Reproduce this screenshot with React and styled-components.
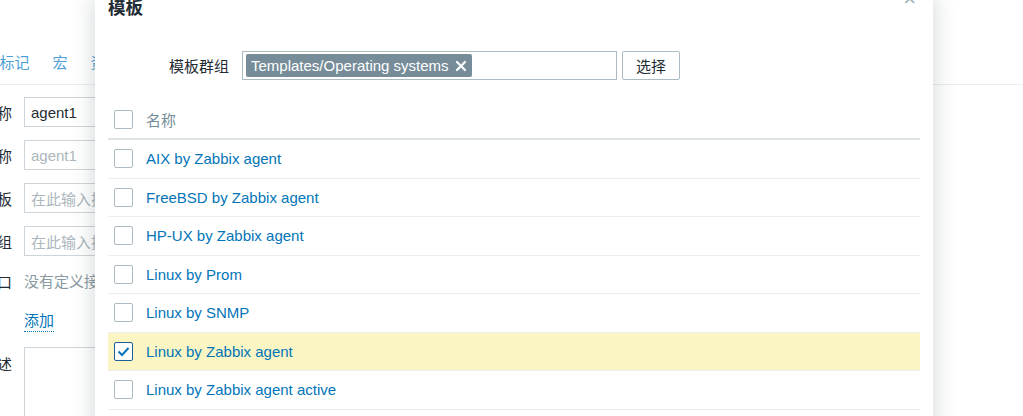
import styled, { createGlobalStyle } from "styled-components";

const GlobalStyle = createGlobalStyle`
  html, body {
    margin: 0;
    padding: 0;
    background: #ffffff;
    overflow: hidden;
  }
  body {
    font-family: "Liberation Sans", "Noto Sans CJK SC", sans-serif;
    font-size: 15px;
    color: #1f2c33;
  }
`;

// Background page
const Page = styled.div`
  position: relative;
  width: 1023px;
  height: 416px;
  overflow: hidden;
`;

const TabBar = styled.div`
  display: flex;
  height: 84px;
  align-items: flex-end;
  border-bottom: 1px solid #ebeef0;
  margin-left: -12px;
`;

const Tab = styled.span`
  padding: 0 11.5px 10px;
  line-height: 22px;
  color: #4f9fd4;
`;

const Form = styled.div`
  display: grid;
  grid-template-columns: 200px 300px;
  column-gap: 12px;
  row-gap: 13px;
  align-items: center;
  margin-left: -188px;
  padding-top: 12px;
`;

const Label = styled.div`
  text-align: right;
  white-space: nowrap;
  align-self: ${(p) => (p.$top ? "start" : "center")};
  padding-top: ${(p) => (p.$top ? "8px" : "0")};
`;

const Input = styled.div`
  height: 30px;
  box-sizing: border-box;
  border: 1px solid #cdd5da;
  padding: 0 6px;
  display: flex;
  align-items: center;
  color: ${(p) => (p.$muted ? "#acb6bc" : "#1f2c33")};
`;

const Note = styled.div`
  color: #8b9aa2;
  line-height: 25px;
`;

const DottedLink = styled.span`
  justify-self: start;
  color: #0275b8;
  border-bottom: 1px dotted #0275b8;
  line-height: 20px;
  margin-top: 4px;
`;

const TextArea = styled.div`
  height: 120px;
  border: 1px solid #cdd5da;
  margin-top: 2px;
`;

// Modal
const Modal = styled.div`
  position: absolute;
  left: 95px;
  top: -4px;
  width: 838px;
  height: 440px;
  background: #ffffff;
  box-shadow: 0 0 22px rgba(40, 60, 70, 0.22);
  box-sizing: border-box;
  padding: 0 13px;
`;

const Header = styled.div`
  display: flex;
  justify-content: space-between;
  align-items: flex-start;
  height: 24px;
`;

const Title = styled.h4`
  margin: 0;
  font-size: 17.5px;
  font-weight: bold;
  line-height: 24px;
  color: #1f2c33;
`;

const Close = styled.span`
  margin-top: -8px;
  margin-right: 4px;
  color: #9fb0b8;
  font-size: 22px;
  line-height: 22px;
`;

const FilterRow = styled.div`
  display: flex;
  align-items: center;
  margin-top: 31px;
`;

const FilterLabel = styled.div`
  width: 121px;
  text-align: right;
  margin-right: 13px;
`;

const MultiSelect = styled.div`
  width: 375px;
  height: 29px;
  box-sizing: border-box;
  border: 1px solid #acbbc2;
  padding: 2px 3px;
  display: flex;
  align-items: center;
`;

const Chip = styled.span`
  display: inline-flex;
  align-items: center;
  gap: 6px;
  height: 23px;
  padding: 0 5px;
  border-radius: 2px;
  background: #768d99;
  color: #ffffff;
  white-space: nowrap;
`;

const Button = styled.button`
  margin-left: 5px;
  width: 58px;
  height: 29px;
  border: 1px solid #acbbc2;
  border-radius: 2px;
  background: #ffffff;
  font-family: inherit;
  font-size: 15px;
  color: #1f2c33;
  padding: 0;
`;

const Table = styled.div`
  margin-top: 20px;
`;

const Row = styled.div`
  display: flex;
  align-items: center;
  gap: 13px;
  height: ${(p) => (p.$head ? "38px" : "37.5px")};
  padding-left: 6px;
  box-sizing: content-box;
  border-bottom: ${(p) => (p.$head ? "2px solid #dfe4e7" : "1px solid #ebeef0")};
  background: ${(p) => (p.$selected ? "#fbf5c4" : "transparent")};
  color: ${(p) => (p.$head ? "#768d99" : "#0275b8")};
`;

const Check = styled.span`
  width: 19px;
  height: 19px;
  box-sizing: border-box;
  border: 1px solid ${(p) => (p.$on ? "#1c5f94" : "#acbbc2")};
  border-radius: 2px;
  background: #ffffff;
  display: flex;
  align-items: center;
  justify-content: center;
  flex: none;
`;

const templates = [
  "AIX by Zabbix agent",
  "FreeBSD by Zabbix agent",
  "HP-UX by Zabbix agent",
  "Linux by Prom",
  "Linux by SNMP",
  "Linux by Zabbix agent",
  "Linux by Zabbix agent active",
];

const App = () => {
  return (
    <Page>
      <GlobalStyle />
      <TabBar>
        <Tab>标记</Tab>
        <Tab>宏</Tab>
        <Tab>资产记录</Tab>
      </TabBar>
      <Form>
        <Label>主机名称</Label>
        <Input>agent1</Input>
        <Label>可见的名称</Label>
        <Input $muted>agent1</Input>
        <Label>模板</Label>
        <Input $muted>在此输入搜索</Input>
        <Label>主机群组</Label>
        <Input $muted>在此输入搜索</Input>
        <Label>接口</Label>
        <Note>没有定义接口。</Note>
        <span />
        <DottedLink>添加</DottedLink>
        <Label $top>描述</Label>
        <TextArea />
      </Form>

      <Modal>
        <Header>
          <Title>模板</Title>
          <Close>×</Close>
        </Header>
        <FilterRow>
          <FilterLabel>模板群组</FilterLabel>
          <MultiSelect>
            <Chip>
              Templates/Operating systems
              <svg width="12" height="12" viewBox="0 0 12 12">
                <path d="M2 2 L10 10 M10 2 L2 10" stroke="#fff" strokeWidth="2.2" strokeLinecap="round" />
              </svg>
            </Chip>
          </MultiSelect>
          <Button>选择</Button>
        </FilterRow>
        <Table>
          <Row $head>
            <Check />
            名称
          </Row>
          {templates.map((name) => {
            const on = name === "Linux by Zabbix agent";
            return (
              <Row key={name} $selected={on}>
                <Check $on={on}>
                  {on && (
                    <svg width="13" height="11" viewBox="0 0 13 11">
                      <path d="M1.5 5.5 L5 9 L11.5 2" fill="none" stroke="#0275b8" strokeWidth="2" />
                    </svg>
                  )}
                </Check>
                {name}
              </Row>
            );
          })}
        </Table>
      </Modal>
    </Page>
  );
};

export default App;
